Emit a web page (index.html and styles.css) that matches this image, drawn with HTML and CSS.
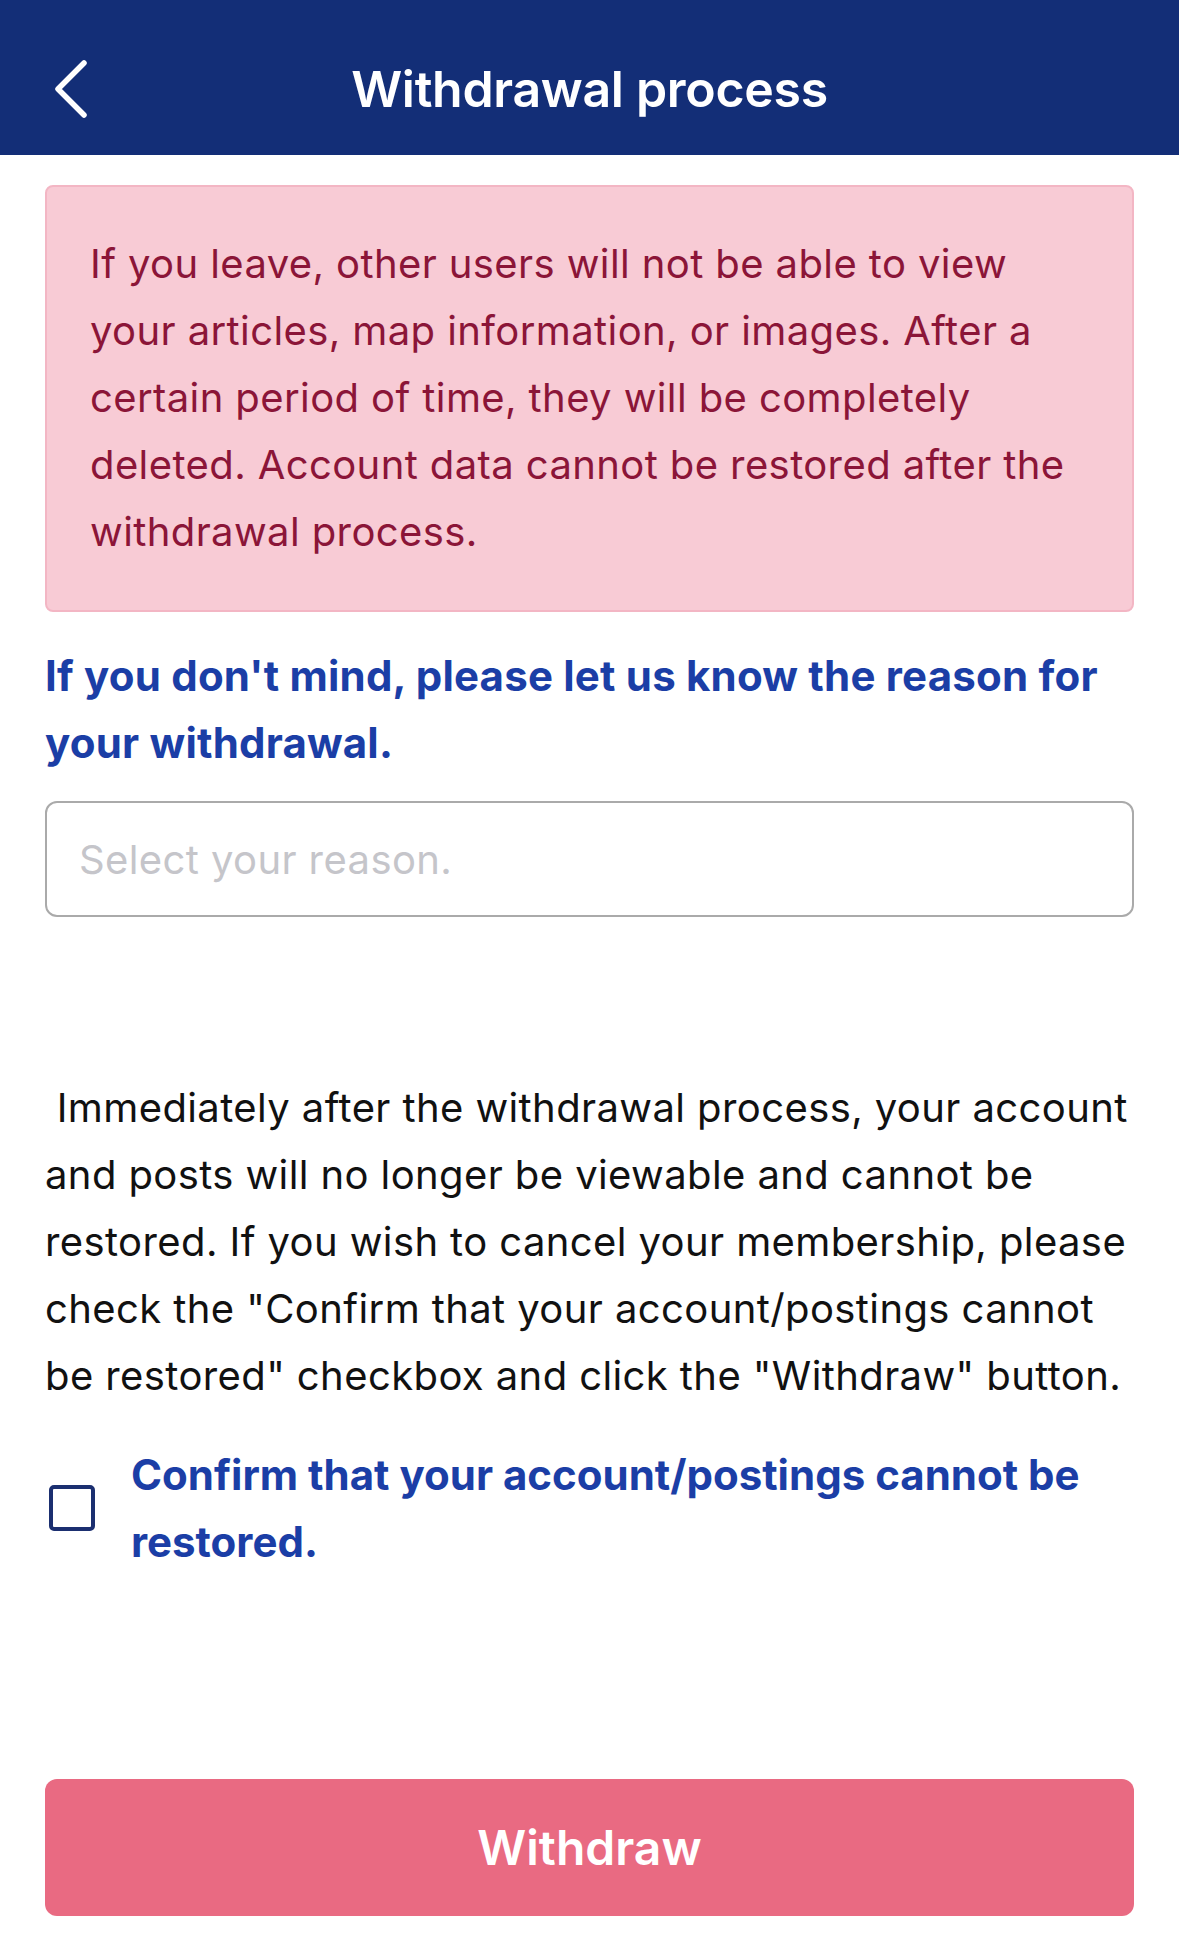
FILE: index.html
```html
<!DOCTYPE html>
<html lang="en">
<head>
<meta charset="utf-8">
<title>Withdrawal process</title>
<link rel="stylesheet" href="styles.css">
</head>
<body>
<header class="topbar">
  <button class="back" aria-label="Back">
    <svg width="40" height="60" viewBox="0 0 40 60"><path d="M32 4 L6 30 L32 56" fill="none" stroke="#fff" stroke-width="5.5" stroke-linecap="round" stroke-linejoin="round"/></svg>
  </button>
  <h1 class="title">Withdrawal process</h1>
  <span></span>
</header>
<main class="content">
  <div class="alert">If you leave, other users will not be able to view your articles, map information, or images. After a certain period of time, they will be completely deleted. Account data cannot be restored after the withdrawal process.</div>
  <h2 class="ask">If you don't mind, please let us know the reason for your withdrawal.</h2>
  <div class="select"><span class="placeholder">Select your reason.</span></div>
  <p class="notice">&nbsp;Immediately after the withdrawal process, your account and posts will no longer be viewable and cannot be restored. If you wish to cancel your membership, please check the "Confirm that your account/postings cannot be restored" checkbox and click the "Withdraw" button.</p>
  <label class="confirm">
    <span class="box"></span>
    <span class="confirm-text">Confirm that your account/postings cannot be restored.</span>
  </label>
  <button class="withdraw">Withdraw</button>
</main>
</body>
</html>
```
FILE: styles.css
```css
* { box-sizing: border-box; }
html, body { margin: 0; padding: 0; background: #fff; }
body {
  font-family: Inter, "Noto Sans", sans-serif;
  width: 1179px;
  min-height: 1958px;
}
.topbar {
  height: 155px;
  background: #132e77;
  display: grid;
  grid-template-columns: 1fr auto 1fr;
  align-items: center;
  padding-top: 22px;
}
.back {
  justify-self: start;
  margin-left: 52px;
  background: none;
  border: 0;
  padding: 0;
  display: flex;
}
.title {
  margin: 0;
  color: #fff;
  font-size: 50px;
  font-weight: 600;
  letter-spacing: -0.3px;
}
.content {
  padding: 0 45px;
  display: flex;
  flex-direction: column;
}
.alert {
  margin-top: 30px;
  background: #f8cbd5;
  border: 2px solid #f3b6c4;
  border-radius: 8px;
  padding: 43px 45px 45px 43px;
  color: #8b1538;
  font-size: 40px;
  line-height: 67px;
  letter-spacing: 0.4px;
}
.ask {
  margin: 30px 0 0;
  color: #1b3ea6;
  font-size: 42px;
  line-height: 67px;
  font-weight: 700;
  letter-spacing: 0.2px;
}
.select {
  margin-top: 25px;
  height: 116px;
  border: 2px solid #aaaaaa;
  border-radius: 12px;
  display: flex;
  align-items: center;
  padding-left: 32px;
}
.placeholder {
  color: #c5c5ca;
  font-size: 40px;
  letter-spacing: 0.4px;
}
.notice {
  margin: 157px 0 0;
  color: #111;
  font-size: 40px;
  line-height: 67px;
  letter-spacing: 0.4px;
}
.confirm {
  margin-top: 32px;
  display: flex;
  align-items: center;
}
.box {
  flex: none;
  width: 46px;
  height: 46px;
  margin-left: 4px;
  margin-right: 36px;
  border: 4px solid #1b2f70;
  border-radius: 5px;
}
.confirm-text {
  color: #1b3ea6;
  font-size: 42px;
  line-height: 67px;
  font-weight: 700;
  letter-spacing: 0;
}
.withdraw {
  margin-top: 204px;
  height: 137px;
  border: 0;
  border-radius: 12px;
  background: #e96a82;
  color: #fff;
  font-family: Inter, "Noto Sans", sans-serif;
  font-size: 48px;
  font-weight: 600;
  letter-spacing: 0;
}
```
